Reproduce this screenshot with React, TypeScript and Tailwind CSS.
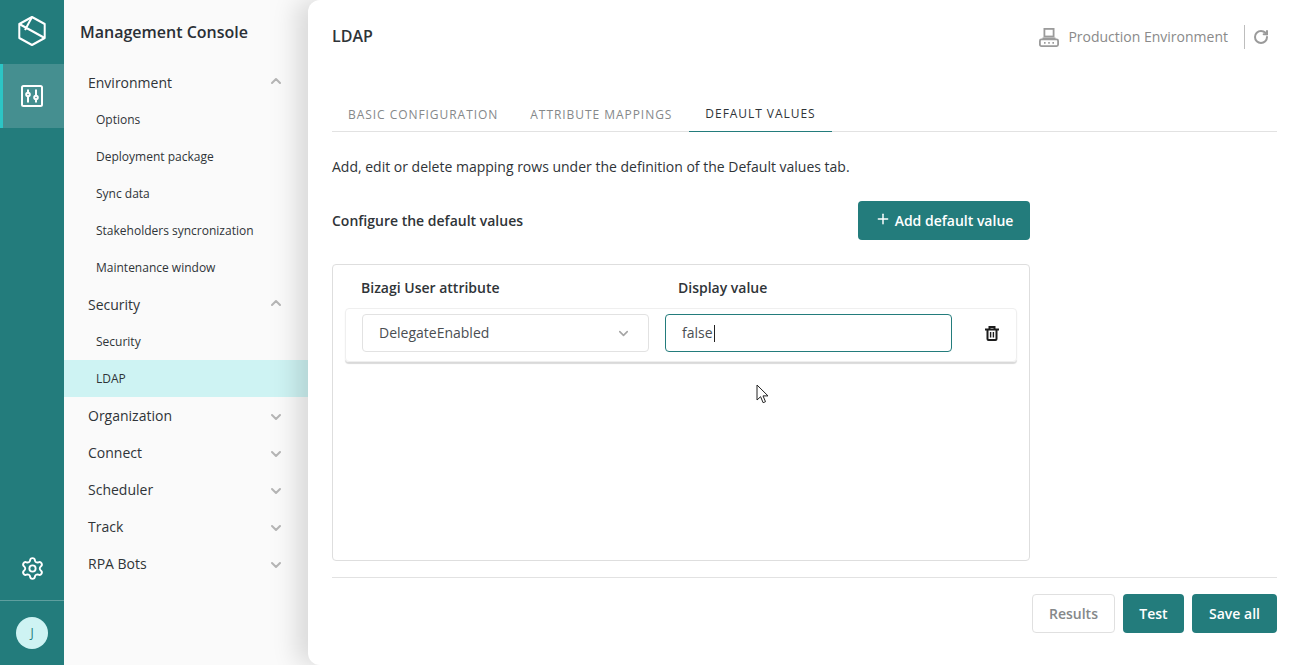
import React from 'react';
import { ChevronDown, ChevronUp, Plus, RotateCw, Settings } from 'lucide-react';

const menu = [
  { label: 'Environment', open: true, items: ['Options', 'Deployment package', 'Sync data', 'Stakeholders syncronization', 'Maintenance window'] },
  { label: 'Security', open: true, items: ['Security', 'LDAP'] },
  { label: 'Organization' },
  { label: 'Connect' },
  { label: 'Scheduler' },
  { label: 'Track' },
  { label: 'RPA Bots' },
];

const tabs = ['BASIC CONFIGURATION', 'ATTRIBUTE MAPPINGS', 'DEFAULT VALUES'];

const Logo = () => (
  <svg width="28" height="30" viewBox="0 0 28 30" fill="none" stroke="white" strokeWidth="2" strokeLinejoin="round">
    <path d="M14 1 26.7 8V22L14 29 1.3 22V8Z" />
    <path d="M1.3 8 26.7 22M14 1 7 14" />
  </svg>
);

const Sliders = () => (
  <svg width="22" height="22" viewBox="0 0 22 22" fill="none" stroke="white" strokeWidth="2">
    <rect x="1" y="1" width="20" height="20" rx="1.5" />
    <path d="M7 4.5v3M7 11.5v6M15 4.5v6M15 14.5v3" />
    <circle cx="7" cy="9.5" r="1.8" />
    <circle cx="15" cy="12.5" r="1.8" />
  </svg>
);

const EnvIcon = () => (
  <svg width="20" height="19" viewBox="0 0 20 19" fill="none" stroke="#9b9b9b" strokeWidth="1.8">
    <rect x="5.4" y="0.9" width="9.2" height="7.6" />
    <path d="M3.5 10.4h13" />
    <rect x="0.9" y="11.4" width="18.2" height="6.7" rx="1.5" />
    <path d="M5 14.8h1.6M9.2 14.8h1.6M13.4 14.8h1.6" />
  </svg>
);

const Bin = () => (
  <svg width="14" height="15" viewBox="0 0 14 15" fill="none" stroke="#1c1c1c" strokeWidth="2">
    <path d="M0 3.5h14M4.5 3V1h5v2" />
    <path d="M2.5 4v9a1 1 0 0 0 1 1h7a1 1 0 0 0 1-1V4" />
    <path d="M5.6 6v5.5M8.4 6v5.5" strokeWidth="1.4" />
  </svg>
);

const Pointer = () => (
  <svg width="14" height="20" viewBox="0 0 14 20" fill="white" stroke="#222" strokeWidth="1">
    <path d="M1 1v15l3.6-3.3 2.5 6 2.4-1-2.5-5.8h5z" />
  </svg>
);

export default function App() {
  return (
    <div className="flex h-[665px] w-[1301px] overflow-hidden bg-[#fafafa] font-['Open_Sans',sans-serif] text-[#2f3438]">
      <aside className="flex w-16 shrink-0 flex-col bg-[#237c7c]">
        <div className="flex h-16 items-center justify-center pb-[2px]">
          <Logo />
        </div>
        <div className="flex h-16 items-center justify-center border-l-[3px] border-[#2cc5c5] bg-[#458f90] pr-[3px]">
          <Sliders />
        </div>
        <div className="flex flex-1 items-end justify-center pb-[19px]">
          <Settings size={25} color="white" strokeWidth={1.8} />
        </div>
        <div className="flex h-[65px] items-center justify-center border-t border-[#5f9f9f]">
          <div className="flex h-8 w-8 items-center justify-center rounded-full bg-[#cef3f3] text-xs text-[#237c7c]">J</div>
        </div>
      </aside>

      <nav className="relative z-0 w-[244px] shrink-0">
        <h1 className="pl-4 pt-[21px] pb-[21px] text-base leading-[22px] font-semibold text-[#2b3036]">Management Console</h1>
        <ul>
          {menu.map((group) => (
            <li key={group.label}>
              <div className="flex h-[37px] items-center justify-between pl-6 pr-6 text-sm">
                <span>{group.label}</span>
                {group.open ? (
                  <ChevronUp size={16} color="#b5b5b5" strokeWidth={3} className="-mt-1" />
                ) : (
                  <ChevronDown size={16} color="#b5b5b5" strokeWidth={3} className="mt-[2px]" />
                )}
              </div>
              {group.items?.map((item) => (
                <div
                  key={item}
                  className={`flex h-[37px] items-center pl-8 text-xs ${item === 'LDAP' ? 'bg-[#cef3f3]' : ''}`}
                >
                  {item}
                </div>
              ))}
            </li>
          ))}
        </ul>
      </nav>

      <main className="relative z-10 flex w-[993px] flex-col rounded-l-xl bg-white px-6 shadow-[-12px_0_24px_rgba(0,0,0,0.13)]">
        <header className="flex h-[72px] items-center justify-between pt-[2px]">
          <h2 className="-mt-[2px] text-base font-semibold leading-[22px]">LDAP</h2>
          <div className="flex items-center pr-[8px] text-sm text-[#8a8a8a]">
            <EnvIcon />
            <span className="ml-[9px]">Production Environment</span>
            <span className="ml-4 h-6 w-px bg-[#bdbdbd]" />
            <RotateCw size={16} color="#9a9a9a" strokeWidth={3} className="ml-[8px]" />
          </div>
        </header>

        <div className="mt-[24px] flex h-[36px] border-b border-[#e2e2e2]">
          {tabs.map((tab) => (
            <div
              key={tab}
              className={`flex h-[36px] items-center px-4 text-xs tracking-[0.95px] ${
                tab === 'DEFAULT VALUES'
                  ? 'ml-[1px] border-b border-[#237c7c] text-[#2f3438]'
                  : 'pt-[2px] text-[#85888a]'
              }`}
            >
              {tab}
            </div>
          ))}
        </div>

        <p className="mt-[25px] text-sm leading-[20px]">Add, edit or delete mapping rows under the definition of the Default values tab.</p>

        <div className="mt-[24px] flex w-[698px] items-center justify-between">
          <span className="text-sm font-semibold">Configure the default values</span>
          <button className="flex h-[39px] w-[172px] items-center justify-center gap-[4px] rounded bg-[#237c7c] text-sm font-semibold text-white">
            <Plus size={16} strokeWidth={2.2} className="-mt-1" />
            Add default value
          </button>
        </div>

        <section className="relative mt-[24px] h-[297px] w-[698px] rounded border border-[#dedede] px-3">
          <div className="flex h-[43px] items-center pl-[16px] pt-[2px] text-sm font-semibold">
            <span className="w-[317px]">Bizagi User attribute</span>
            <span>Display value</span>
          </div>
          <div className="flex h-[54px] items-center rounded border border-[#efefef] pb-[4px] pl-4 shadow-[0_2px_1px_rgba(0,0,0,0.15)]">
            <div className="flex h-[38px] w-[287px] items-center justify-between rounded border border-[#e2e2e2] pl-4 pr-[17px] text-sm text-[#4a4e52]">
              DelegateEnabled
              <ChevronDown size={15} color="#a5a5a5" strokeWidth={2.5} />
            </div>
            <div className="ml-4 flex h-[38px] w-[287px] items-center rounded border border-[#237c7c] pl-4 text-sm text-[#4a4e52]">
              false
              <span className="ml-px h-[17px] w-px bg-[#222]" />
            </div>
            <span className="ml-[33px]">
              <Bin />
            </span>
          </div>
          <div className="absolute left-[423px] top-[119px]">
            <Pointer />
          </div>
        </section>

        <footer className="mt-4 flex justify-end gap-2 border-t border-[#e2e2e2] pt-4">
          <button className="h-[39px] w-[83px] rounded border border-[#e0e0e0] text-sm font-semibold text-[#85888a]">Results</button>
          <button className="h-[39px] w-[61px] rounded bg-[#237c7c] text-sm font-semibold text-white">Test</button>
          <button className="h-[39px] w-[85px] rounded bg-[#237c7c] text-sm font-semibold text-white">Save all</button>
        </footer>
      </main>
    </div>
  );
}
